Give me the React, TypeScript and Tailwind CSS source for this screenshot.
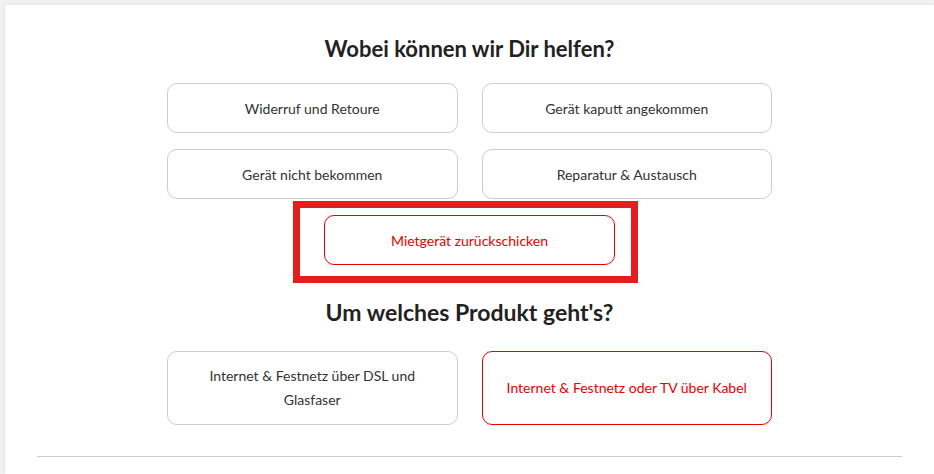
const topics = ["Widerruf und Retoure", "Gerät kaputt angekommen", "Gerät nicht bekommen", "Reparatur & Austausch"];

const App = () => {
  return (
    <div className="min-h-[474px] bg-[#f2f2f2] pl-[5px] pt-[5px] font-['Lato',sans-serif] text-[#333]">
      <div className="h-[469px] bg-white shadow-[0_0_6px_rgba(0,0,0,0.08)] px-8">
        <h2 className="pt-[29px] text-center text-[22px] leading-[30px] font-bold text-[#222]">Wobei können wir Dir helfen?</h2>

        <div className="mx-auto mt-[19px] grid w-[605px] grid-cols-2 gap-x-6 gap-y-4">
          {topics.map((t) => (
            <button key={t} className="h-[50px] rounded-[10px] border border-[#cccccc] bg-white text-[14px] text-[#333]">
              {t}
            </button>
          ))}
        </div>

        <div className="mt-4 flex justify-center">
          <div className="relative">
            <button className="h-[50px] w-[291px] rounded-[10px] border border-[#e60000] bg-white text-[14px] text-[#e60000]">
              Mietgerät zurückschicken
            </button>
            {/* annotation frame */}
            <div className="pointer-events-none absolute -left-[31px] -top-[14px] -right-[23px] -bottom-[18px] border-[7px] border-[#e41e1e]" />
          </div>
        </div>

        <h2 className="mt-[32px] text-center text-[23px] leading-[30px] font-bold text-[#222]">Um welches Produkt geht's?</h2>

        <div className="mx-auto mt-[24px] grid w-[605px] grid-cols-2 gap-x-6">
          <button className="h-[74px] rounded-[10px] border border-[#cccccc] bg-white px-10 text-[14px] leading-6 text-[#333]">
            Internet &amp; Festnetz über DSL und Glasfaser
          </button>
          <button className="h-[74px] rounded-[10px] border border-[#e60000] bg-white px-3 text-[14px] leading-6 text-[#e60000]">
            Internet &amp; Festnetz oder TV über Kabel
          </button>
        </div>

        <div className="mt-[31px] border-t border-[#cccccc]" />
      </div>
    </div>
  );
};

export default App;
